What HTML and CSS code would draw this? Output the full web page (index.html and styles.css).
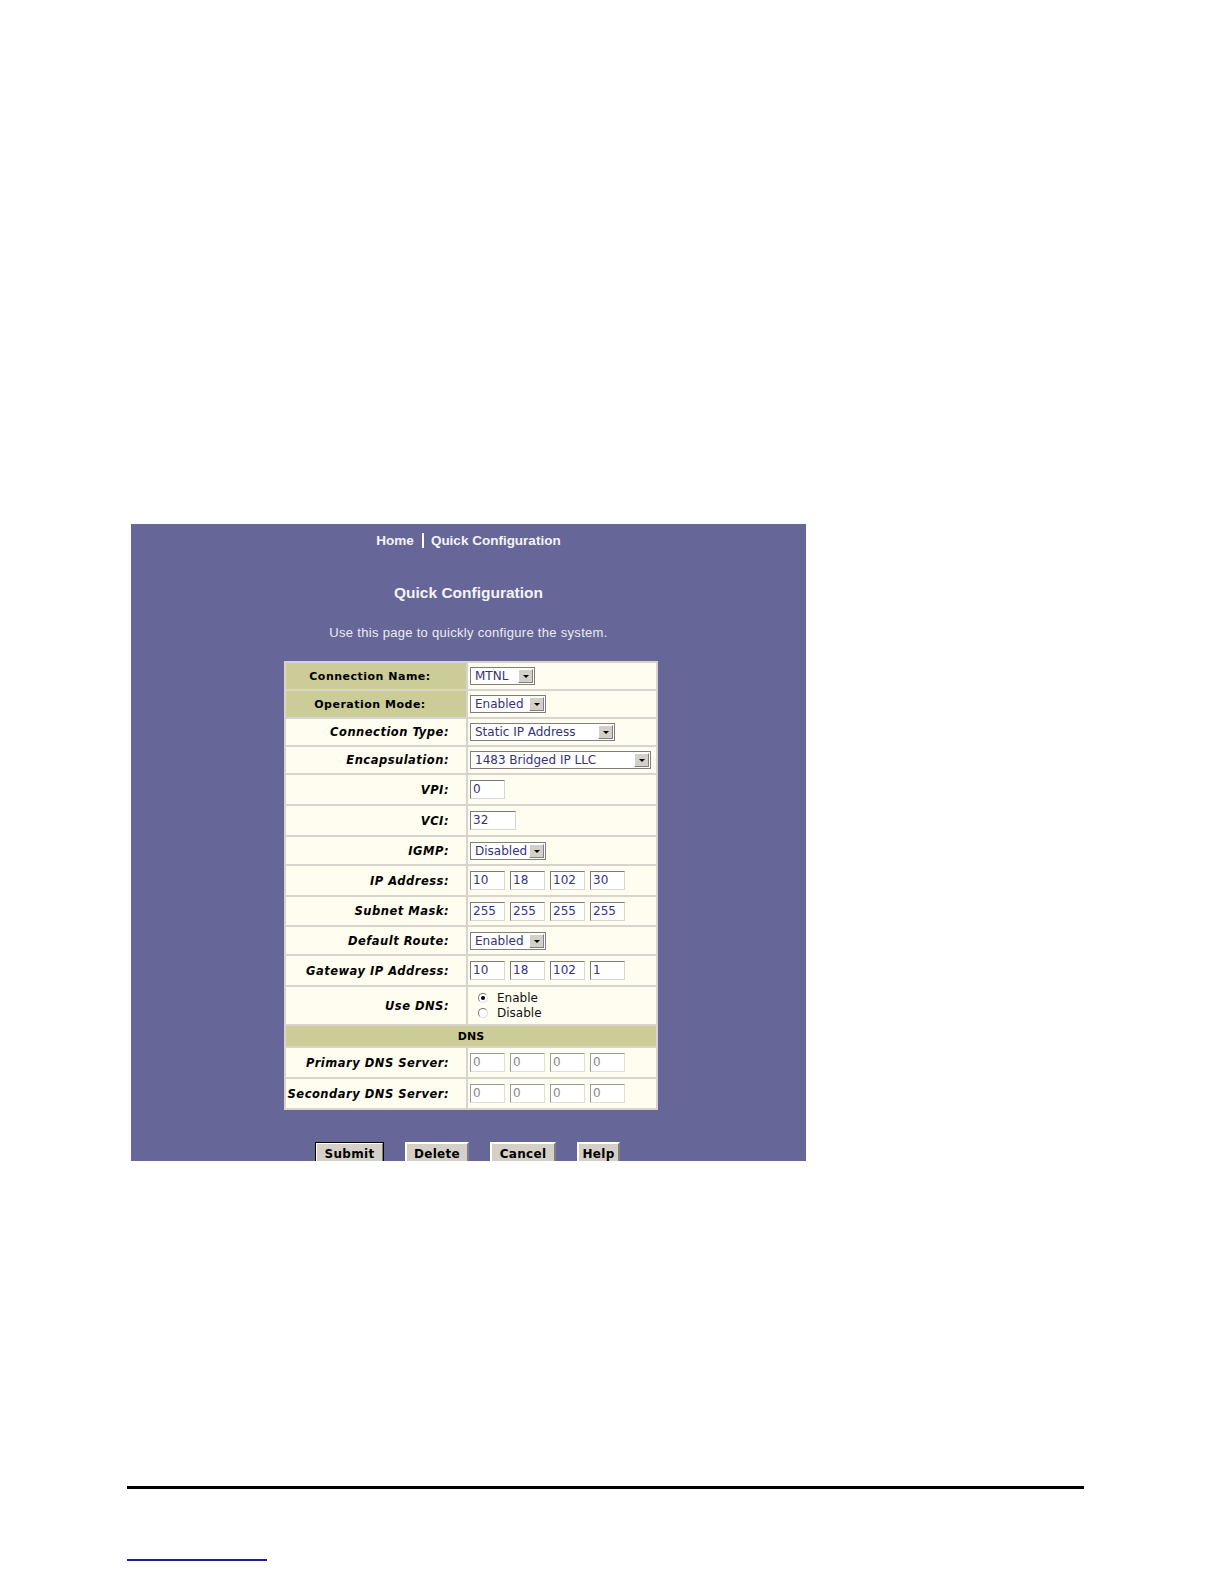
FILE: index.html
```html
<!DOCTYPE html>
<html lang="en">
<head>
<meta charset="UTF-8">
<title>Quick Configuration</title>
<link rel="stylesheet" href="styles.css">
</head>
<body>
<div class="page">
    <div class="panel">
        <div class="nav"><span>Home</span><span class="bar"></span><span>Quick Configuration</span></div>
        <h1 class="title">Quick Configuration</h1>
        <p class="intro">Use this page to quickly configure the system.</p>

        <table class="conf">
            <tr class="r28">
                <th class="hd">Connection Name:</th>
                <td><span class="sel w65"><span class="txt">MTNL</span><span class="arr"></span></span></td>
            </tr>
            <tr class="r28">
                <th class="hd">Operation Mode:</th>
                <td><span class="sel w76"><span class="txt">Enabled</span><span class="arr"></span></span></td>
            </tr>
            <tr class="r28">
                <th>Connection Type:</th>
                <td><span class="sel w145"><span class="txt">Static IP Address</span><span class="arr"></span></span></td>
            </tr>
            <tr class="r28">
                <th>Encapsulation:</th>
                <td><span class="sel w181"><span class="txt">1483 Bridged IP LLC</span><span class="arr"></span></span></td>
            </tr>
            <tr class="r31">
                <th>VPI:</th>
                <td><span class="inp">0</span></td>
            </tr>
            <tr class="r31">
                <th>VCI:</th>
                <td><span class="inp w46">32</span></td>
            </tr>
            <tr class="r29">
                <th>IGMP:</th>
                <td><span class="sel w76"><span class="txt">Disabled</span><span class="arr"></span></span></td>
            </tr>
            <tr class="r31">
                <th>IP Address:</th>
                <td><div class="ip"><span class="inp">10</span><span class="inp">18</span><span class="inp">102</span><span class="inp">30</span></div></td>
            </tr>
            <tr class="r30">
                <th>Subnet Mask:</th>
                <td><div class="ip"><span class="inp">255</span><span class="inp">255</span><span class="inp">255</span><span class="inp">255</span></div></td>
            </tr>
            <tr class="r29">
                <th>Default Route:</th>
                <td><span class="sel w76"><span class="txt">Enabled</span><span class="arr"></span></span></td>
            </tr>
            <tr class="r31">
                <th>Gateway IP Address:</th>
                <td><div class="ip"><span class="inp">10</span><span class="inp">18</span><span class="inp">102</span><span class="inp">1</span></div></td>
            </tr>
            <tr class="r39">
                <th>Use DNS:</th>
                <td>
                    <div class="radio"><span class="dot on"></span>Enable</div>
                    <div class="radio"><span class="dot"></span>Disable</div>
                </td>
            </tr>
            <tr class="r22">
                <td class="sect" colspan="2">DNS</td>
            </tr>
            <tr class="r31">
                <th>Primary DNS Server:</th>
                <td><div class="ip"><span class="inp gray">0</span><span class="inp gray">0</span><span class="inp gray">0</span><span class="inp gray">0</span></div></td>
            </tr>
            <tr class="r31">
                <th>Secondary DNS Server:</th>
                <td><div class="ip"><span class="inp gray">0</span><span class="inp gray">0</span><span class="inp gray">0</span><span class="inp gray">0</span></div></td>
            </tr>
        </table>

        <div class="buttons">
            <button class="btn def w69">Submit</button>
            <button class="btn w64">Delete</button>
            <button class="btn w66">Cancel</button>
            <button class="btn w43">Help</button>
        </div>
    </div>

    <div class="rule"></div>
    <div class="link-line"></div>
</div>
</body>
</html>
```

FILE: styles.css
```css
* {margin: 0; padding: 0; box-sizing: border-box;}
body {background: #fff; font-family: "DejaVu Sans", Verdana, sans-serif;}

.page {
    padding: 524px 0 0 131px;
}
.panel {
    width: 675px;
    height: 637px;
    background: #666699;
    overflow: hidden;
    color: #fff;
    text-align: center;
}
.nav {
    height: 32px;
    display: flex;
    justify-content: center;
    align-items: center;
    font-family: "Liberation Sans", Arial, sans-serif;
    font-weight: bold;
    font-size: 13.5px;
    color: #f4f4fa;
}
.nav .bar {
    display: inline-block;
    width: 2px;
    height: 15px;
    background: #fff;
    margin: 0 7px 0 8px;
}
.title {
    margin-top: 27px;
    line-height: 20px;
    font-family: "Liberation Sans", Arial, sans-serif;
    font-size: 15.5px;
    font-weight: bold;
    color: #f4f4fa;
}
.intro {
    margin-top: 22px;
    line-height: 16px;
    font-family: "Liberation Sans", Arial, sans-serif;
    font-size: 13px;
    letter-spacing: 0.3px;
    color: #ececf4;
}

/* settings table */
.conf {
    margin: 20px 0 0 153px;
    width: 374px;
    border-collapse: collapse;
    background: #fffdf0;
    text-align: left;
    color: #000;
}
.conf th, .conf td {
    border: 2px solid #d6d4cc;
    padding: 0;
}
.conf th {
    width: 182px;
    text-align: right;
    padding-right: 17px;
    font-size: 11.5px;
    font-weight: bold;
    font-style: italic;
    white-space: nowrap;
    letter-spacing: 0.5px;
}
.conf th.hd {
    background: #cccc99;
    font-style: normal;
    text-align: center;
    padding-right: 12px;
    font-size: 11px;
    letter-spacing: 0.5px;
}
.conf td {
    padding-left: 2px;
    font-size: 12px;
}
.conf td.sect {
    background: #cccc99;
    text-align: center;
    font-weight: bold;
    font-size: 11px;
    padding: 0;
}
.r22 {height: 22px;}
.r28 {height: 28px;}
.r29 {height: 29px;}
.r30 {height: 30px;}
.r31 {height: 31px;}
.r39 {height: 39px;}

/* fake select */
.sel {
    display: flex;
    align-items: center;
    height: 18px;
    border: 1px solid #7f7f7f;
    background: #fff;
    color: #333377;
}
.sel .txt {
    flex: 1;
    padding-left: 4px;
    font-size: 12px;
    line-height: 16px;
    white-space: nowrap;
}
.sel .arr {
    width: 15px;
    height: 14px;
    margin-right: 1px;
    background: #d4d0c8;
    border: 1px solid;
    border-color: #fff #808080 #808080 #fff;
    position: relative;
}
.sel .arr::after {
    content: "";
    position: absolute;
    left: 4px;
    top: 5px;
    border-left: 3px solid transparent;
    border-right: 3px solid transparent;
    border-top: 3px solid #000;
}
.w65 {width: 65px;}
.w76 {width: 76px;}
.w145 {width: 145px;}
.w181 {width: 181px;}

/* fake text inputs */
.inp {
    display: block;
    width: 35px;
    height: 19px;
    border: 1px solid;
    border-color: #7a7a7a #d8d6d0 #d8d6d0 #7a7a7a;
    background: #fff;
    color: #333388;
    font-size: 12px;
    line-height: 17px;
    padding-left: 2px;
}
.inp.w46 {width: 46px;}
.inp.gray {color: #888; border-color: #9a9a9a #e0ded8 #e0ded8 #9a9a9a;}
.ip {
    display: flex;
    gap: 5px;
}

.radio {
    display: flex;
    align-items: center;
    font-size: 12px;
    line-height: 15px;
    color: #111;
    padding-left: 8px;
}
.radio .dot {
    width: 10px;
    height: 10px;
    border-radius: 50%;
    border: 1px solid #777;
    border-right-color: #ddd;
    border-bottom-color: #ddd;
    background: #fff;
    margin-right: 9px;
    position: relative;
}
.radio .dot.on::after {
    content: "";
    position: absolute;
    left: 2px;
    top: 2px;
    width: 4px;
    height: 4px;
    border-radius: 50%;
    background: #000;
}

/* buttons */
.buttons {
    margin-top: 32px;
    display: flex;
    justify-content: center;
    gap: 21px;
    padding-right: 2px;
}
.btn {
    height: 23px;
    background: #d4d0c8;
    border: 2px solid;
    border-color: #fff #808080 #808080 #fff;
    font-family: "DejaVu Sans", Verdana, sans-serif;
    font-size: 12px;
    font-weight: bold;
    letter-spacing: 0.3px;
    color: #000;
}
.btn.def {
    outline: 1px solid #000;
    outline-offset: -1px;
}
.w69 {width: 69px;}
.w64 {width: 64px;}
.w66 {width: 66px;}
.w43 {width: 43px;}

.rule {
    margin: 325px 0 0 -4px;
    width: 957px;
    height: 3px;
    background: #000;
}
.link-line {
    margin: 70px 0 0 -4px;
    width: 140px;
    height: 2px;
    background: #1f1f99;
}
```
